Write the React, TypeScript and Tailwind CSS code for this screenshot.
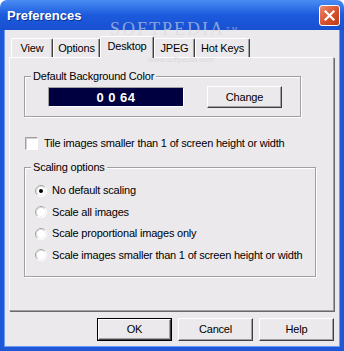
import React from 'react';

function Radio({ checked }: { checked?: boolean }) {
  return (
    <svg width="12" height="12" viewBox="0 0 12 12" className="shrink-0">
      <circle cx="6" cy="6" r="5.5" fill="#fff" stroke="#ffffff" />
      <path d="M2.11 9.89 A5.5 5.5 0 0 1 9.89 2.11" stroke="#a0a0a0" fill="none" />
      <path d="M2.82 9.18 A4.5 4.5 0 0 1 9.18 2.82" stroke="#d8d8d8" fill="none" />
      <path d="M9.18 2.82 A4.5 4.5 0 0 1 2.82 9.18" stroke="#f0f0f0" fill="none" />
      {checked && <circle cx="6" cy="6" r="2" fill="#000" />}
    </svg>
  );
}

function Btn({ label, def }: { label: string; def?: boolean }) {
  return (
    <div className={`w-[75px] h-[23px] flex ${def ? 'border border-black' : ''}`}>
      <div className="flex-1 flex items-center justify-center bg-[#ece9ec] border border-t-white border-l-white border-r-[#404040] border-b-[#404040] shadow-[inset_-1px_-1px_0_#a0a0a0]">
        {label}
      </div>
    </div>
  );
}

function Tab({ label, w, active }: { label: string; w: string; active?: boolean }) {
  if (active) {
    return (
      <div className={`${w} relative z-10 -mb-px h-[22px] flex justify-center pt-[3px] bg-[#ece9ec] border-t border-l border-white border-r border-r-[#404040] rounded-t-[2px] shadow-[inset_-1px_0_0_#a0a0a0]`}>
        {label}
      </div>
    );
  }
  return (
    <div className={`${w} h-[19px] flex justify-center pt-[3px] bg-[#ece9ec] border-t border-l border-white border-r border-r-[#404040] rounded-t-[2px] shadow-[inset_-1px_0_0_#a0a0a0]`}>
      {label}
    </div>
  );
}

export default function App() {
  return (
    <div className="relative w-[344px] h-[351px] flex flex-col font-['Liberation_Sans',Arial,sans-serif] text-[11px] leading-[13px] tracking-[-0.2px] text-black select-none">
      {/* title bar */}
      <div className="h-[30px] shrink-0 rounded-t-[7px] bg-gradient-to-b from-[#4a8cf3] via-[#1c5add] to-[#1850d0] flex items-center pl-[7px] pr-[4px]">
        <span className="text-white font-bold text-[13px] leading-[16px] tracking-normal mt-[1px] [text-shadow:1px_1px_0_#0b2f95]">Preferences</span>
        <div className="ml-auto w-[21px] h-[21px] rounded-[3px] border border-white bg-gradient-to-br from-[#ea8a6c] via-[#d9552f] to-[#bf3a16] flex items-center justify-center">
          <svg width="11" height="11" viewBox="0 0 11 11">
            <path d="M1.5 1.5 L9.5 9.5 M9.5 1.5 L1.5 9.5" stroke="#fff" strokeWidth="2.2" strokeLinecap="square" />
          </svg>
        </div>
      </div>

      {/* client */}
      <div className="flex-1 flex flex-col bg-[#ece9ec] border-x-[4px] border-b-[4px] border-[#1f58d6] shadow-[inset_1px_0_0_#6b9bf0,inset_-1px_0_0_#6b9bf0,inset_0_-1px_0_#6b9bf0] pt-[6px]">
        <div className="flex items-end ml-[7px]">
          <Tab label="View" w="w-[42px]" />
          <Tab label="Options" w="w-[47px]" />
          <Tab label="Desktop" w="w-[54px]" active />
          <Tab label="JPEG" w="w-[41px]" />
          <Tab label="Hot Keys" w="w-[55px]" />
        </div>

        {/* panel */}
        <div className="ml-[5px] mr-[6px] h-[254px] border border-t-white border-l-white border-r-[#a0a0a0] border-b-[#a0a0a0] shadow-[1px_1px_0_#6a6a6a] pt-[12px] pl-[14px]">
          <fieldset className="w-[277px] border border-[#a0a0a0] shadow-[inset_1px_1px_0_#fff,1px_1px_0_#fff]">
            <legend className="ml-[6px] px-[2px] bg-[#ece9ec]">Default Background Color</legend>
            <div className="flex items-center gap-[23px] pt-[3px] pb-[8px] pl-[23px]">
              <div className="w-[136px] h-[20px] flex items-center justify-center bg-[#000040] border border-t-[#a0a0a0] border-l-[#a0a0a0] border-b-white border-r-white text-white font-bold text-[13px] tracking-[0.5px]">
                0 0 64
              </div>
              <div className="w-[75px] h-[22px] flex items-center justify-center border border-t-white border-l-white border-r-[#404040] border-b-[#404040] shadow-[inset_-1px_-1px_0_#a0a0a0]">
                Change
              </div>
            </div>
          </fieldset>

          <div className="mt-[20px] ml-[1px] flex items-center gap-[6px]">
            <span className="w-[13px] h-[13px] shrink-0 bg-white border border-t-[#a0a0a0] border-l-[#a0a0a0] border-r-white border-b-white shadow-[inset_1px_1px_0_#d0d0d0]" />
            <span>Tile images smaller than 1 of screen height or width</span>
          </div>

          <fieldset className="mt-[11px] w-[292px] border border-[#a0a0a0] shadow-[inset_1px_1px_0_#fff,1px_1px_0_#fff]">
            <legend className="ml-[6px] px-[2px] bg-[#ece9ec]">Scaling options</legend>
            <div className="flex flex-col gap-[8.5px] pt-[10px] pb-[14px] pl-[10px]">
              <div className="flex items-center gap-[5px] h-[13px]"><Radio checked /><span>No default scaling</span></div>
              <div className="flex items-center gap-[5px] h-[13px]"><Radio /><span>Scale all images</span></div>
              <div className="flex items-center gap-[5px] h-[13px]"><Radio /><span>Scale proportional images only</span></div>
              <div className="flex items-center gap-[5px] h-[13px]"><Radio /><span>Scale images smaller than 1 of screen height or width</span></div>
            </div>
          </fieldset>
        </div>

        <div className="flex justify-end gap-[6px] mt-[7px] mr-[6px]">
          <Btn label="OK" def />
          <Btn label="Cancel" />
          <Btn label="Help" />
        </div>
      </div>

      {/* watermark */}
      <div className="absolute left-[110px] top-[22px] pointer-events-none font-['Liberation_Serif',serif] text-[18px] leading-[15px] tracking-[2px] text-[#d8d8e0] opacity-60">
        SOFTPEDIA<span className="text-[6px] align-top ml-[1px]">TM</span>
      </div>
      <div className="absolute left-[148px] top-[56px] pointer-events-none text-[8px] leading-[8px] text-[#dcd9dc]">
        www.softpedia.com
      </div>
    </div>
  );
}
